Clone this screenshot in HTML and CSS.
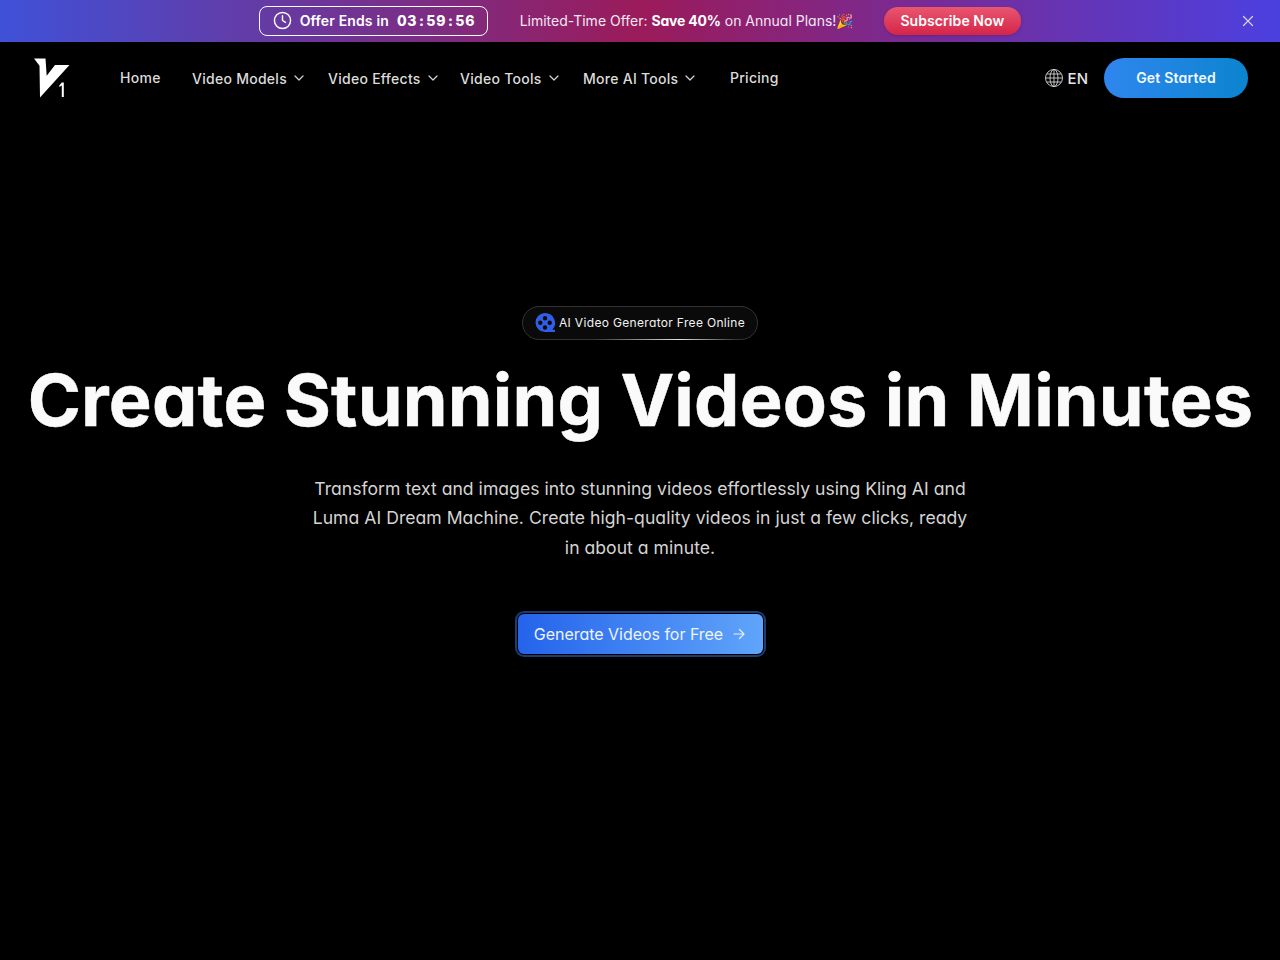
FILE: index.html
```html
<!DOCTYPE html>
<html lang="en">
<head>
    <meta charset="UTF-8">
    <meta name="viewport" content="width=device-width, initial-scale=1.0">
    <title>AI Video Generator</title>
    <link rel="stylesheet" href="styles.css">
</head>
<body>
    <div class="promo">
        <div class="timer">
            <svg class="timer-icon" viewBox="0 0 20 20" fill="none" stroke="#fff" stroke-width="1.5" stroke-linecap="round" stroke-linejoin="round"><circle cx="10" cy="10" r="8.5"/><path d="M10 5v5l3.2 2"/></svg>
            <span class="timer-label">Offer Ends in</span>
            <span class="timer-count">03 : 59 : 56</span>
        </div>
        <p class="promo-text">Limited-Time Offer: <b>Save 40%</b> on Annual Plans!🎉</p>
        <button class="subscribe">Subscribe Now</button>
        <button class="promo-close" aria-label="Close">
            <svg viewBox="0 0 12 12" fill="none" stroke="#d9d5f2" stroke-width="1.2" stroke-linecap="round"><path d="M1.5 1.5l9 9M10.5 1.5l-9 9"/></svg>
        </button>
    </div>

    <header class="nav">
        <a class="logo" href="#">
            <svg viewBox="0 0 36 40" width="36" height="40"><path d="M0 .5H11.500L12.700 17.700L21 7H35.500L6 39.500L5.500 7.700Z" fill="#fff"/><path d="M25.300 27.500L27.800 24.500H29.800V39H27.800V27.500L25.300 29Z" fill="#fff"/></svg>
        </a>
        <nav class="links">
            <a class="link link-home" href="#">Home</a>
            <a class="link link-models" href="#">Video Models<svg class="chev" viewBox="0 0 10 6"><path d="M1 1l4 4 4-4"/></svg></a>
            <a class="link link-effects" href="#">Video Effects<svg class="chev" viewBox="0 0 10 6"><path d="M1 1l4 4 4-4"/></svg></a>
            <a class="link link-tools" href="#">Video Tools<svg class="chev" viewBox="0 0 10 6"><path d="M1 1l4 4 4-4"/></svg></a>
            <a class="link link-more" href="#">More AI Tools<svg class="chev" viewBox="0 0 10 6"><path d="M1 1l4 4 4-4"/></svg></a>
            <a class="link link-pricing" href="#">Pricing</a>
        </nav>
        <div class="nav-right">
            <div class="lang">
                <svg class="globe" viewBox="0 0 18 18" fill="none" stroke="#d4d4d4" stroke-width="0.9"><circle cx="9" cy="9" r="8.500"/><ellipse cx="9" cy="9" rx="4" ry="8.500"/><path d="M9 .5v17M.5 9h17M1.500 5h15M1.500 13h15"/></svg>
                <span>EN</span>
            </div>
            <a class="get-started" href="#">Get Started</a>
        </div>
    </header>

    <main class="hero">
        <div class="badge">
            <svg class="badge-icon" viewBox="0 0 20 20"><path fill-rule="evenodd" fill="#2f5fe6" d="M10 0a10 10 0 0 1 7.400 16.700H20V19h-10a9.500 9.500 0 0 1 0-19ZM10 3a2.200 2.200 0 1 0 0 4.400A2.200 2.200 0 0 0 10 3ZM5.300 7.500a2.200 2.200 0 1 0 0 4.400 2.200 2.200 0 0 0 0-4.400ZM14.700 7.500a2.200 2.200 0 1 0 0 4.400 2.200 2.200 0 0 0 0-4.400ZM10 12.300a2.200 2.200 0 1 0 0 4.400 2.200 2.200 0 0 0 0-4.400Z"/></svg>
            <span>AI Video Generator Free Online</span>
        </div>
        <h1>Create Stunning Videos in Minutes</h1>
        <p class="lead">Transform text and images into stunning videos effortlessly using Kling AI and Luma AI Dream Machine. Create high-quality videos in just a few clicks, ready in about a minute.</p>
        <a class="cta" href="#">Generate Videos for Free
            <svg class="cta-arrow" viewBox="0 0 12 12" fill="none" stroke="#e6efff" stroke-width="1.2" stroke-linecap="round" stroke-linejoin="round"><path d="M1 6h10M6.500 1.500L11 6l-4.500 4.500"/></svg>
        </a>
    </main>
</body>
</html>
```

FILE: styles.css
```css
* {
    box-sizing: border-box;
}

body {
    margin: 0;
    background-color: #000;
    color: #fff;
    font-family: Inter, "Noto Sans", sans-serif;
    font-feature-settings: "cv11";
    height: 960px;
    overflow: hidden;
}

a {
    text-decoration: none;
    color: inherit;
}

/* top banner */
.promo {
    height: 42px;
    display: flex;
    align-items: center;
    justify-content: center;
    position: relative;
    background: linear-gradient(90deg, #3f51d8 0%, #9b1b5a 50%, #4b40e0 100%);
}

.timer {
    width: 229px;
    height: 30px;
    display: flex;
    align-items: center;
    padding-left: 13px;
    padding-bottom: 1px;
    border: 1px solid #fff;
    border-radius: 8px;
    font-size: 14px;
    font-weight: 600;
    margin-right: 32px;
}

.timer-icon {
    width: 19px;
    height: 19px;
    margin-right: 8px;
}

.timer-label {
    letter-spacing: 0.15px;
    margin-right: 8px;
}

.timer-count {
    font-weight: 800;
    letter-spacing: 0.7px;
    word-spacing: -2px;
}

.promo-text {
    margin: 0 31px 2px 0;
    font-size: 14px;
    color: #f1e8f3;
}

.promo-text b {
    color: #fff;
    font-weight: 700;
    letter-spacing: -0.2px;
}

.subscribe {
    width: 137px;
    height: 28px;
    padding: 0 1px 2px 0;
    border: none;
    border-radius: 14px;
    background: linear-gradient(180deg, #e9566f 0%, #d42548 100%);
    color: #fff;
    font-family: inherit;
    font-feature-settings: inherit;
    font-size: 14px;
    font-weight: 600;
    letter-spacing: 0.08px;
    box-shadow: 0 1px 3px rgba(0, 0, 0, 0.15);
}

.promo-close {
    position: absolute;
    right: 26px;
    top: 15px;
    width: 12px;
    height: 12px;
    padding: 0;
    border: none;
    background: none;
}

.promo-close svg {
    display: block;
}

/* navigation */
.nav {
    height: 72px;
    display: flex;
    align-items: center;
    padding: 0 32px 0 34px;
}

.logo {
    width: 36px;
    height: 40px;
    margin-right: 50px;
}

.logo svg {
    display: block;
}

.links {
    display: flex;
    align-items: center;
    font-size: 14px;
    font-weight: 500;
    color: #dcdcdc;
    letter-spacing: 0.27px;
}

.link {
    display: flex;
    align-items: center;
}

.link-home {
    width: 72px;
    padding-bottom: 2px;
}

.link-models {
    width: 136px;
}

.link-effects {
    width: 132px;
}

.link-tools {
    width: 123px;
}

.link-more {
    width: 147px;
}

.link-pricing {
    padding-bottom: 2px;
}

.chev {
    width: 10px;
    height: 6px;
    margin-left: 7px;
    fill: none;
    stroke: #d4d4d4;
    stroke-width: 1.2;
    stroke-linecap: round;
    stroke-linejoin: round;
}

.nav-right {
    margin-left: auto;
    display: flex;
    align-items: center;
}

.lang {
    display: flex;
    align-items: center;
    font-size: 15px;
    font-weight: 500;
    color: #e5e5e5;
    margin-right: 16px;
}

.globe {
    width: 18px;
    height: 18px;
    margin-right: 5px;
}

.get-started {
    width: 144px;
    height: 40px;
    padding-bottom: 2px;
    border-radius: 20px;
    display: flex;
    align-items: center;
    justify-content: center;
    background: linear-gradient(90deg, #2f86ee 0%, #0b84cf 100%);
    font-size: 14px;
    font-weight: 600;
    letter-spacing: 0.2px;
    color: #f1f8ff;
}

/* hero */
.hero {
    display: flex;
    flex-direction: column;
    align-items: center;
    padding-top: 192px;
}

.badge {
    width: 236px;
    height: 34px;
    display: flex;
    align-items: center;
    padding-left: 12px;
    border: 1px solid #333;
    border-radius: 17px;
    background-color: #0a0a0a;
    font-size: 12px;
    letter-spacing: 0.33px;
    color: #f2f2f2;
    position: relative;
}

.badge span {
    margin-bottom: 2px;
}

.badge::after {
    content: "";
    position: absolute;
    left: 70px;
    right: 20px;
    bottom: -1px;
    height: 1px;
    background: linear-gradient(90deg, transparent, #e0e0e0 60%, transparent);
}

.badge-icon {
    width: 20px;
    height: 20px;
    margin-right: 4px;
}

h1 {
    margin: 20px 0 0 1px;
    font-size: 72px;
    line-height: 80px;
    font-weight: 700;
    letter-spacing: 0.2px;
    -webkit-text-stroke: 0.5px #fafafa;
    color: #fafafa;
    white-space: nowrap;
}

.lead {
    width: 672px;
    margin: 34px 0 0;
    font-size: 17.600px;
    letter-spacing: 0.02px;
    line-height: 29.330px;
    text-align: center;
    color: #d4d4d4;
}

.cta {
    width: 245px;
    height: 40px;
    margin: 52px 0 0 1px;
    padding-right: 2px;
    display: flex;
    align-items: center;
    justify-content: center;
    border-radius: 6px;
    box-shadow: 0 0 0 1px #000, 0 0 0 3px #1f3a70;
    background: linear-gradient(90deg, #2563eb 0%, #60a5fa 100%);
    font-size: 16px;
    letter-spacing: -0.03px;
    color: #eef4ff;
}

.cta-arrow {
    width: 12px;
    height: 12px;
    margin-left: 10px;
}
```
